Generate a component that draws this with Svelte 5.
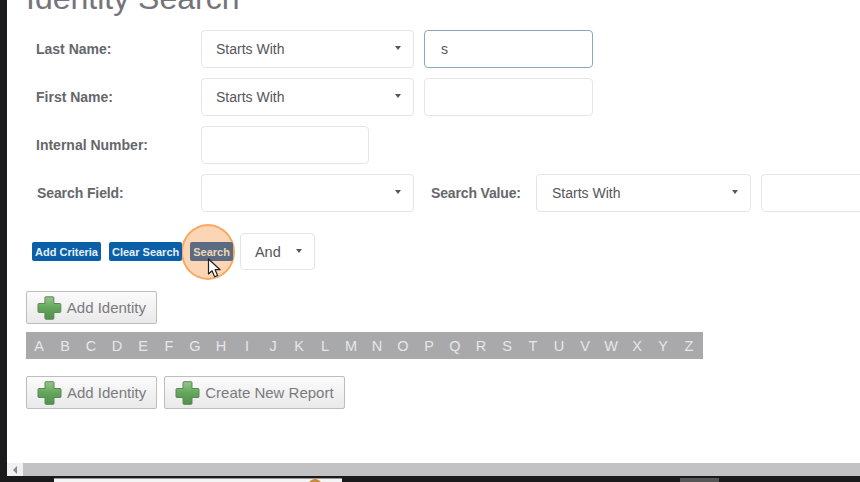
<script lang="ts">
	const letters = "ABCDEFGHIJKLMNOPQRSTUVWXYZ".split("");
</script>

{#snippet plus()}
	<svg class="plus" width="25" height="24" viewBox="0 0 25 24">
		<defs>
			<linearGradient id="green" x1="0" y1="0" x2="0" y2="1">
				<stop offset="0" stop-color="#93c78a" />
				<stop offset="0.5" stop-color="#62a65b" />
				<stop offset="1" stop-color="#4f924c" />
			</linearGradient>
		</defs>
		<path
			d="M9 .7h7a1 1 0 0 1 1 1V7.500h6a1 1 0 0 1 1 1v7a1 1 0 0 1-1 1h-6v5.800a1 1 0 0 1-1 1H9a1 1 0 0 1-1-1v-5.800H2a1 1 0 0 1-1-1v-7a1 1 0 0 1 1-1h6V1.700a1 1 0 0 1 1-1z"
			fill="url(#green)"
			stroke="#5f8559"
		/>
	</svg>
{/snippet}

{#snippet select(text: string, cls: string)}
	<div class="select {cls}">
		<span>{text}</span>
		<i class="caret"></i>
	</div>
{/snippet}

<div class="page">
	<div class="window">
		<main class="content">
			<h1>Identity Search</h1>

			<div class="row">
				<label for="last">Last Name:</label>
				{@render select("Starts With", "wide")}
				<input id="last" class="text focused" value="s" />
			</div>
			<div class="row">
				<label for="first">First Name:</label>
				{@render select("Starts With", "wide")}
				<input id="first" class="text" />
			</div>
			<div class="row">
				<label for="internal">Internal Number:</label>
				<input id="internal" class="text" />
			</div>
			<div class="row">
				<label class="nudge" for="value">Search Field:</label>
				{@render select("", "wide")}
				<label class="value-label" for="value">Search Value:</label>
				{@render select("Starts With", "value")}
				<input id="value" class="text" />
			</div>

			<div class="actions">
				<button class="mini">Add Criteria</button>
				<button class="mini">Clear Search</button>
				<button class="mini active">
					Search
					<span class="ring"></span>
					<svg class="pointer" width="16" height="21" viewBox="0 0 16 21">
						<path
							d="M1.500 1v15l3.600-3.200 2.500 6 3-1.300-2.500-5.800h5z"
							fill="#fff"
							stroke="#222"
							stroke-width="1.200"
							stroke-linejoin="round"
						/>
					</svg>
				</button>
				{@render select("And", "and")}
			</div>

			<button class="add first-add">{@render plus()}Add Identity</button>

			<div class="alpha">
				{#each letters as letter}
					<span>{letter}</span>
				{/each}
			</div>

			<div class="bottom-actions">
				<button class="add">{@render plus()}Add Identity</button>
				<button class="add">{@render plus()}Create New Report</button>
			</div>
		</main>
		<div class="scrollbar">
			<div class="arrow"><i></i></div>
			<div class="thumb"></div>
		</div>
	</div>
	<div class="taskbar">
		<div class="tab"><b></b></div>
		<div class="tab-dim"></div>
	</div>
</div>

<style>
	:global(body) {
		margin: 0;
		background: #222;
	}

	.page {
		width: 860px;
		height: 482px;
		display: flex;
		flex-direction: column;
		overflow: hidden;
		background: #1a1a1c;
		font-family: "Liberation Sans", Arial, sans-serif;
		position: relative;
	}

	.window {
		flex: 1;
		min-height: 0;
		margin-left: 7px;
		display: flex;
		flex-direction: column;
		background: #fff;
		margin-bottom: 2px;
	}

	.content {
		flex: 1;
		min-height: 0;
		overflow: hidden;
		padding-left: 19px;
		box-sizing: border-box;
	}

	h1 {
		margin: -20px 0 0;
		height: 50px;
		font-size: 32px;
		line-height: 36px;
		font-weight: 400;
		color: #74747a;
	}

	.row {
		display: flex;
		align-items: center;
		height: 38px;
		margin-bottom: 10px;
		padding-left: 10px;
	}

	label {
		width: 165px;
		flex: none;
		font-size: 14px;
		font-weight: 700;
		color: #65676b;
		white-space: nowrap;
	}

	.nudge {
		padding-left: 1px;
		width: 164px;
		letter-spacing: -0.1px;
	}

	.value-label {
		width: 105px;
		margin-left: 17px;
		letter-spacing: -0.15px;
	}

	.select {
		box-sizing: border-box;
		height: 38px;
		display: flex;
		align-items: center;
		justify-content: space-between;
		flex: none;
		background: #fff;
		border: 1px solid #e2e4e7;
		border-radius: 4px;
		padding: 0 12px 0 14px;
		font-size: 14px;
		color: #55555a;
	}

	.wide {
		width: 213px;
	}

	.value {
		width: 215px;
		padding-left: 15px;
	}

	.and {
		width: 75px;
		height: 37px;
		font-size: 14.500px;
	}

	.caret {
		width: 0;
		height: 0;
		margin-top: -2px;
		border-left: 3.500px solid transparent;
		border-right: 3.500px solid transparent;
		border-top: 4px solid #55575b;
	}

	.text {
		box-sizing: border-box;
		width: 169px;
		height: 38px;
		flex: none;
		margin-left: 10px;
		padding: 0 16px;
		background: #fff;
		border: 1px solid #e4e6e9;
		border-radius: 4px;
		font: 14px "Liberation Sans", Arial, sans-serif;
		color: #55555a;
		outline: none;
	}

	.row > label + .text {
		margin-left: 0;
		width: 168px;
	}

	.text.focused {
		border-color: #8ba8ba;
	}

	.actions {
		display: flex;
		align-items: center;
		height: 37px;
		margin-top: 21px;
		padding-left: 6px;
		isolation: isolate;
	}

	.mini {
		position: relative;
		height: 19px;
		padding: 0 3px;
		margin-right: 8px;
		border: 0;
		border-radius: 2px;
		background: #0b5ea8;
		color: #e6f0f8;
		font: 700 11px "Liberation Sans", Arial, sans-serif;
		white-space: nowrap;
	}

	.active {
		background: #5b6b82;
		color: #e9d9b4;
		margin-right: 7px;
	}

	.ring {
		position: absolute;
		left: -9px;
		top: -18px;
		width: 50px;
		height: 52px;
		border-radius: 50%;
		border: 2px solid #f6a966;
		background: #fcd5b4;
		z-index: -1;
		pointer-events: none;
	}

	.pointer {
		position: absolute;
		left: 17px;
		top: 16px;
	}

	.add {
		display: inline-flex;
		align-items: center;
		gap: 5px;
		box-sizing: border-box;
		height: 33px;
		padding: 0 10px 0 10px;
		border: 1px solid #bdbdbd;
		border-radius: 2px;
		background: linear-gradient(#fbfbfb, #e9e9e9);
		color: #7b7b7f;
		font: 15px "Liberation Sans", Arial, sans-serif;
		white-space: nowrap;
	}

	.first-add {
		display: flex;
		margin-top: 21px;
		width: 131px;
	}

	.alpha {
		display: flex;
		width: 677px;
		height: 27px;
		margin-top: 8px;
		background: #a9a9ac;
	}

	.alpha span {
		width: 26px;
		flex: none;
		text-align: center;
		line-height: 28px;
		font-size: 14.500px;
		color: #e6e6e8;
	}

	.bottom-actions {
		display: flex;
		gap: 7px;
		margin-top: 17px;
	}

	.scrollbar {
		height: 13px;
		display: flex;
		flex: none;
		background: #f1f1f1;
	}

	.arrow {
		width: 16px;
		display: flex;
		align-items: center;
		justify-content: center;
	}

	.arrow i {
		width: 0;
		height: 0;
		border-top: 4px solid transparent;
		border-bottom: 4px solid transparent;
		border-right: 4px solid #8a8a8c;
	}

	.thumb {
		flex: 1;
		background: #c2c1c3;
	}

	.taskbar {
		height: 4px;
		flex: none;
		display: flex;
		padding-left: 54px;
	}

	.tab {
		width: 288px;
		background: #f4f4f4;
		position: relative;
		overflow: hidden;
		border-top: 1px solid #999;
		box-sizing: border-box;
	}

	.tab b {
		position: absolute;
		left: 254px;
		top: 0;
		width: 14px;
		height: 14px;
		border-radius: 50%;
		background: #c88a3c;
	}

	.tab-dim {
		width: 39px;
		margin-left: 338px;
		background: #555;
	}
</style>
